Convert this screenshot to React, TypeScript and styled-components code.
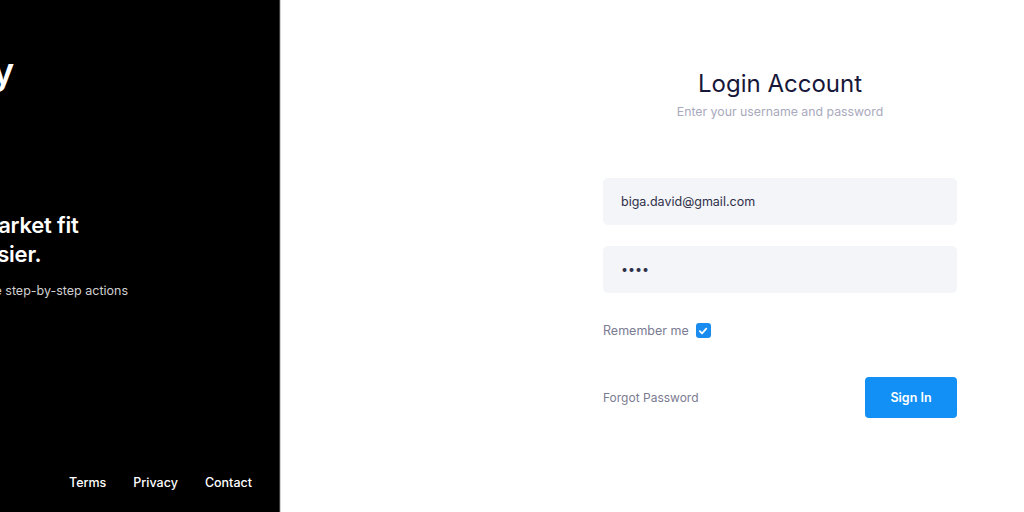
import * as React from 'react';
import styled, { createGlobalStyle } from 'styled-components';

const GlobalStyle = createGlobalStyle`
  html, body {
    margin: 0;
    padding: 0;
    background: #ffffff;
    font-family: Inter, 'Open Sans', sans-serif;
  }
  * {
    box-sizing: border-box;
  }
`;

const Page = styled.div`
  display: flex;
  width: 1024px;
  height: 512px;
  overflow: hidden;
`;

const Aside = styled.aside`
  position: relative;
  flex: 0 0 280px;
  height: 100%;
  background: #000000;
  border-right: 1px solid #3c3c3c;
  box-shadow: 1px 0 0 #d4d4d4;
  overflow: hidden;
  display: flex;
  flex-direction: column;
  color: #ffffff;
`;

const AsideInner = styled.div`
  flex: 1;
  display: flex;
  flex-direction: column;
  margin-left: -92px;
  padding-top: 48px;
  white-space: nowrap;
`;

const Logo = styled.div`
  font-size: 37px;
  font-weight: 600;
  letter-spacing: -0.5px;
  line-height: 46px;
  margin-left: 3px;
`;

const Hero = styled.h2`
  margin: 117px 0 0;
  font-size: 22px;
  line-height: 29px;
  font-weight: 600;
  letter-spacing: -0.2px;
`;

const HeroText = styled.p`
  margin: 14px 0 0;
  font-size: 12.5px;
  color: #d0d0d0;
`;

const FooterNav = styled.nav`
  margin-top: auto;
  display: flex;
  justify-content: flex-end;
  gap: 27px;
  padding: 0 27px 22px 0;
`;

const FooterLink = styled.a`
  font-size: 12.5px;
  font-weight: 500;
  color: #ffffff;
  text-decoration: none;
`;

const Main = styled.main`
  flex: 1;
  display: flex;
  justify-content: flex-end;
  padding: 68px 67px 0 0;
`;

const Form = styled.form`
  width: 354px;
  display: flex;
  flex-direction: column;
`;

const Title = styled.h1`
  margin: 0;
  text-align: center;
  font-size: 24px;
  line-height: 32px;
  font-weight: 400;
  color: #17173a;
`;

const Subtitle = styled.p`
  margin: 4px 0 0;
  text-align: center;
  font-size: 12.3px;
  color: #a9a9bd;
`;

const Field = styled.input<{ $gap: number }>`
  margin-top: ${(p) => p.$gap}px;
  height: 47px;
  width: 100%;
  border: none;
  border-radius: 5px;
  background: #f3f5f8;
  padding: 0 18px;
  font-family: inherit;
  font-size: 12.5px;
  color: #30304a;
  outline: none;
`;

const RememberRow = styled.label`
  margin-top: 30px;
  display: flex;
  align-items: center;
  gap: 7px;
  font-size: 12.5px;
  color: #7b7b92;
`;

const CheckBox = styled.span`
  width: 15px;
  height: 15px;
  border-radius: 3px;
  background: #1a8cf0;
  display: flex;
  align-items: center;
  justify-content: center;
`;

const ActionRow = styled.div`
  margin-top: 39px;
  display: flex;
  align-items: center;
  justify-content: space-between;
`;

const Forgot = styled.a`
  font-size: 12px;
  color: #7b7b92;
  text-decoration: none;
`;

const SubmitButton = styled.button`
  width: 92px;
  height: 41px;
  border: none;
  border-radius: 4px;
  background: #1390f5;
  color: #ffffff;
  font-family: inherit;
  font-size: 12.5px;
  font-weight: 600;
`;

export default function App() {
  return (
    <>
      <GlobalStyle />
      <Page>
        <Aside>
          <AsideInner>
            <Logo>Guidy</Logo>
            <Hero>
              Reach market fit
              <br />
              made easier.
            </Hero>
            <HeroText>Learn by simple step-by-step actions</HeroText>
          </AsideInner>
          <FooterNav>
            <FooterLink href="#">Terms</FooterLink>
            <FooterLink href="#">Privacy</FooterLink>
            <FooterLink href="#">Contact</FooterLink>
          </FooterNav>
        </Aside>
        <Main>
          <Form onSubmit={(e) => e.preventDefault()}>
            <Title>Login Account</Title>
            <Subtitle>Enter your username and password</Subtitle>
            <Field $gap={59} type="text" defaultValue="biga.david@gmail.com" />
            <Field $gap={21} type="password" defaultValue="1234" />
            <RememberRow>
              Remember me
              <CheckBox>
                <svg width="10" height="10" viewBox="0 0 10 10">
                  <path d="M1.8 5.2 L4 7.3 L8.3 2.7" fill="none" stroke="#fff" strokeWidth="1.8" strokeLinecap="round" strokeLinejoin="round" />
                </svg>
              </CheckBox>
            </RememberRow>
            <ActionRow>
              <Forgot href="#">Forgot Password</Forgot>
              <SubmitButton type="submit">Sign In</SubmitButton>
            </ActionRow>
          </Form>
        </Main>
      </Page>
    </>
  );
}
